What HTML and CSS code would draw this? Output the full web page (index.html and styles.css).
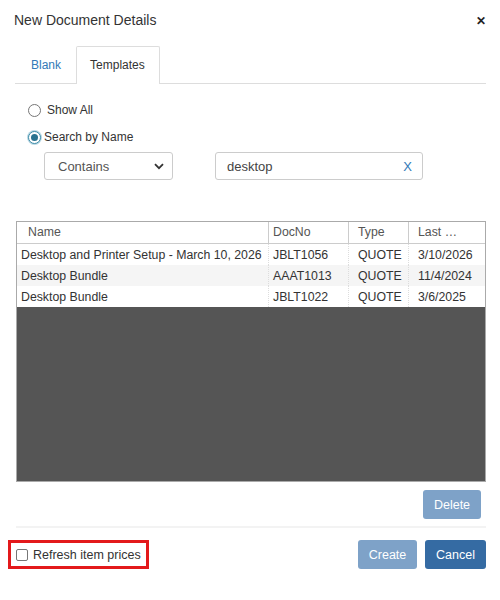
FILE: index.html
```html
<!DOCTYPE html>
<html>
<head>
<meta charset="utf-8">
<link rel="stylesheet" href="styles.css">
</head>
<body>
<div class="dialog">
  <div class="titlebar">
    <span class="title">New Document Details</span>
    <span class="close">&#x2715;</span>
  </div>
  <div class="body">
    <div class="tabs">
      <div class="tab">Blank</div>
      <div class="tab active">Templates</div>
    </div>
    <div class="options">
      <label class="radio-row"><span class="radio"></span><span>Show All</span></label>
      <label class="radio-row"><span class="radio checked"></span><span>Search by Name</span></label>
      <div class="filters">
        <div class="select"><span>Contains</span>
          <svg class="chev" width="10" height="7" viewBox="0 0 10 7"><path d="M1 1.2 L5 5.2 L9 1.2" fill="none" stroke="#333" stroke-width="1.8"/></svg>
        </div>
        <div class="search"><span>desktop</span><span class="clear">X</span></div>
      </div>
    </div>
    <div class="grid">
      <div class="grow head">
        <div class="c c1">Name</div><div class="c c2">DocNo</div><div class="c c3">Type</div><div class="c c4">Last …</div>
      </div>
      <div class="grow">
        <div class="c c1">Desktop and Printer Setup - March 10, 2026</div><div class="c c2">JBLT1056</div><div class="c c3">QUOTE</div><div class="c c4">3/10/2026</div>
      </div>
      <div class="grow alt">
        <div class="c c1">Desktop Bundle</div><div class="c c2">AAAT1013</div><div class="c c3">QUOTE</div><div class="c c4">11/4/2024</div>
      </div>
      <div class="grow">
        <div class="c c1">Desktop Bundle</div><div class="c c2">JBLT1022</div><div class="c c3">QUOTE</div><div class="c c4">3/6/2025</div>
      </div>
      <div class="empty"></div>
    </div>
    <div class="delete-row"><button class="btn light">Delete</button></div>
    <div class="sep"></div>
  </div>
  <div class="footer">
    <label class="refresh"><span class="checkbox"></span><span>Refresh item prices</span></label>
    <div class="actions">
      <button class="btn light">Create</button>
      <button class="btn primary">Cancel</button>
    </div>
  </div>
</div>
</body>
</html>
```

FILE: styles.css
```css
* { box-sizing: border-box; }
html, body { margin: 0; padding: 0; background: #fff; }
body {
  font-family: "Liberation Sans", Arial, sans-serif;
  font-size: 12px;
  color: #333;
}
.dialog { width: 500px; height: 600px; }
.titlebar {
  height: 40px;
  display: flex;
  align-items: center;
  justify-content: space-between;
  padding: 0 14px 0 14px;
}
.title { font-size: 14px; color: #333; }
.close { font-size: 12px; font-weight: bold; color: #222; margin-top: 1px; }
.body { padding: 0 14px 0 16px; }
.tabs {
  margin-top: 6px;
  margin-left: -1px;
  height: 38px;
  display: flex;
  border-bottom: 1px solid #ddd;
}
.tab {
  padding: 0 14px 0 15px;
  line-height: 36px;
  color: #337ab7;
  border: 1px solid transparent;
  border-bottom: none;
}
.tab.active {
  color: #333;
  border-color: #ddd;
  background: #fff;
  height: 38px;
  margin-bottom: -1px;
  border-radius: 2px 2px 0 0;
  width: 84px;
  padding: 0 0 0 13px;
}
.options { padding-left: 12px; padding-top: 19px; }
.radio-row {
  display: flex;
  align-items: center;
  height: 14px;
  margin-bottom: 13px;
}
.radio {
  width: 13px; height: 13px;
  border: 1px solid #767676;
  border-radius: 50%;
  margin-right: 6px;
  position: relative;
  background: #fff;
}
.radio.checked {
  border: 1px solid #3d8ca8;
  box-shadow: 0 0 0 1px #b9d8e4;
  margin-right: 3px;
}
.radio.checked::after {
  content: "";
  position: absolute;
  left: 2px; top: 2px;
  width: 7px; height: 7px;
  border-radius: 50%;
  background: #2a7390;
}
.filters {
  display: flex;
  gap: 42px;
  margin-left: 16px;
  margin-top: -5px;
}
.select, .search {
  height: 28px;
  border: 1px solid #ccc;
  border-radius: 3px;
  display: flex;
  align-items: center;
  justify-content: space-between;
  color: #555;
  font-size: 13px;
}
.select { width: 129px; padding: 0 8px 0 13px; }
.search { width: 208px; padding: 0 10px 0 11px; color: #444; }
.clear { color: #337ab7; font-size: 13px; }
.grid {
  margin-top: 41px;
  width: 470px;
  border: 1px solid #aaa;
  height: 261px;
  display: flex;
  flex-direction: column;
  font-size: 12.3px;
}
.grow {
  display: flex;
  height: 21px;
  line-height: 22px;
  background: #fff;
  flex: none;
}
.grow.alt { background: #f5f5f5; }
.grow.head {
  height: 22px;
  line-height: 21px;
  border-bottom: 1px solid #ccc;
  color: #555;
}
.c {
  white-space: nowrap;
  overflow: hidden;
  border-left: 1px dotted #ddd;
  padding-left: 4px;
}
.head .c { border-left: 1px solid #ccc; }
.c1 { width: 251px; border-left: none !important; }
.head .c1 { padding-left: 11px; }
.c2 { width: 80px; }
.c3 { width: 60px; padding-left: 9px; }
.c4 { flex: 1; padding-left: 9px; }
.empty { flex: 1; background: #555; }
.delete-row {
  display: flex;
  justify-content: flex-end;
  margin-top: 8px;
  padding-right: 5px;
}
.btn {
  font-family: "Liberation Sans", Arial, sans-serif;
  font-size: 12.5px;
  color: #fff;
  border: none;
  border-radius: 3px;
  height: 29px;
  padding: 0 10px;
}
.btn.light { background: #7ea2c8; }
.btn.primary { background: #356ba3; }
.delete-row .btn { width: 58px; padding: 0; }
.sep { height: 2px; background: #f3f3f3; margin-top: 7px; width: 470px; }
.footer {
  display: flex;
  justify-content: space-between;
  align-items: center;
  padding: 0 14px 0 8px;
  margin-top: 12px;
}
.refresh {
  display: flex;
  align-items: center;
  width: 141px;
  height: 29px;
  border: 3px solid #e3191b;
  padding-left: 5px;
  color: #333;
  font-size: 12.5px;
}
.checkbox {
  width: 12px; height: 12px;
  border: 1px solid #767676;
  border-radius: 2px;
  margin-right: 5px;
  background: #fff;
}
.actions { display: flex; gap: 8px; }
.actions .btn:first-child { width: 59px; padding: 0; }
.actions .btn:last-child { width: 61px; padding: 0; }
```
